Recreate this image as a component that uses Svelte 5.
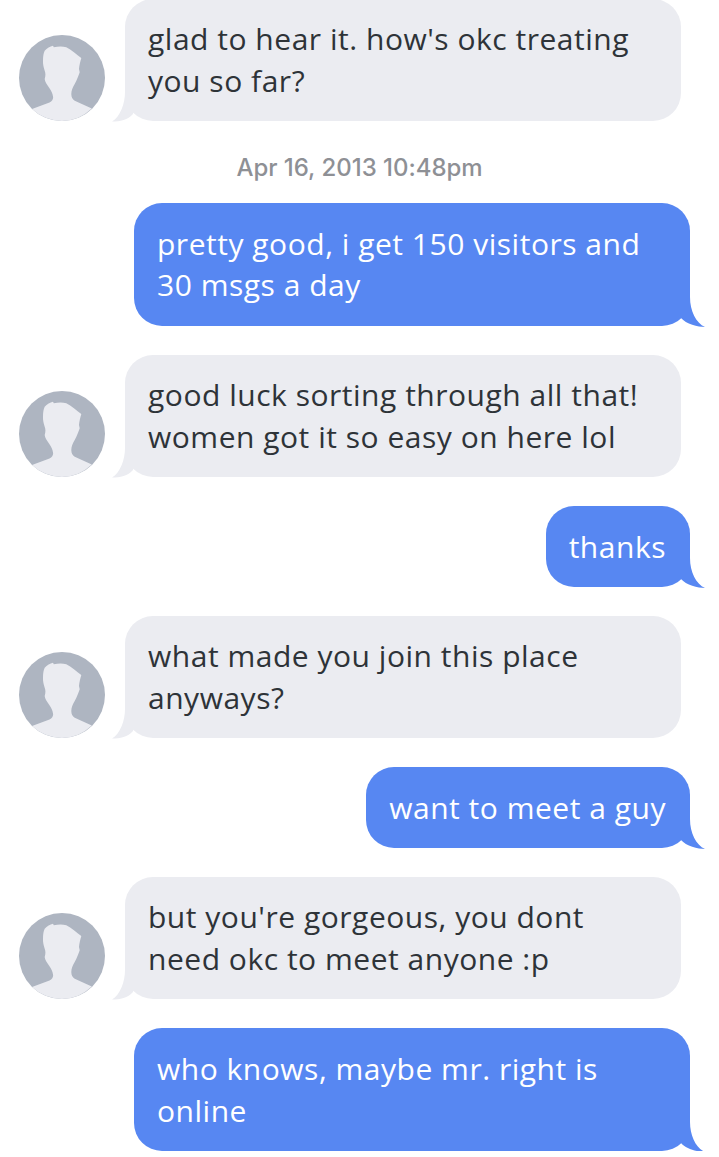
<script>
  const messages = [
    { from: 'them', text: "glad to hear it. how's okc treating you so far?" },
    { time: 'Apr 16, 2013 10:48pm' },
    { from: 'me', text: 'pretty good, i get 150 visitors and 30 msgs a day' },
    { from: 'them', text: 'good luck sorting through all that! women got it so easy on here lol' },
    { from: 'me', text: 'thanks' },
    { from: 'them', text: 'what made you join this place anyways?' },
    { from: 'me', text: 'want to meet a guy' },
    { from: 'them', text: "but you're gorgeous, you dont need okc to meet anyone :p" },
    { from: 'me', text: 'who knows, maybe mr. right is online' }
  ];
</script>

<div class="thread">
  {#each messages as m}
    {#if m.time}
      <div class="time">{m.time}</div>
    {:else if m.from === 'them'}
      <div class="row them">
        <svg class="avatar" viewBox="0 0 86 86" aria-hidden="true">
          <circle cx="43" cy="43" r="43" fill="#aeb5c1" />
          <path
            fill="#ebecf1"
            d="M13 74 L30.500 67.500 C33.500 66 34.500 63.500 34 61.500 C33.500 58.500 32.500 56 30 52.500 C27.500 49 26 46.500 25.700 44 C26.500 41 26.800 38.500 25.700 35.700 C24.500 32 23.800 28.500 24 25.700 C24 21.500 24.500 18 25.700 15.700 C28 13 31 11.500 34 10.700 L34.800 12.200 C39 11.300 43.500 11 47.300 12.300 C52.500 15 57.500 19.500 62.300 23 C61.300 26.500 60.300 30.500 60 34 L60.700 37.300 C59.300 41.500 57.700 45.500 55.700 49 C53.700 52.500 52.300 55.500 52.300 59 C52.300 62 53.500 64.500 55.700 65.700 L72.800 73.600 A43 43 0 0 1 13 74 Z"
          />
        </svg>
        <div class="bubble">
          <svg class="tail" viewBox="0 0 24 30" aria-hidden="true">
            <path d="M13 0 C13 12 8 25 0 29.500 C8 29.500 16 28 21 22 L24 0 Z" />
          </svg>
          {m.text}
        </div>
      </div>
    {:else}
      <div class="row me">
        <div class="bubble">
          {m.text}
          <svg class="tail" viewBox="0 0 24 30" aria-hidden="true">
            <path d="M9 0 C9 14 15 26 24 30 C17 30 5 27 0 21 L0 0 Z" />
          </svg>
        </div>
      </div>
    {/if}
  {/each}
</div>

<style>
  :global(body) {
    background: #fff;
  }
  .thread {
    display: flex;
    flex-direction: column;
    gap: 29px;
    margin-top: -1.5px;
    font-family: "Open Sans", Inter, sans-serif;
    font-size: 30px;
    line-height: 41.8px;
    letter-spacing: 0.52px;
  }
  .row {
    display: flex;
    align-items: flex-end;
  }
  .them {
    gap: 20px;
    padding-left: 19px;
  }
  .me {
    justify-content: flex-end;
    padding-right: 29px;
  }
  .avatar {
    width: 86px;
    height: 86px;
    flex: none;
  }
  .bubble {
    position: relative;
    max-width: 556px;
    box-sizing: border-box;
    padding: 19.45px 24px 19.45px 23px;
    border-radius: 28px;
  }
  .them .bubble {
    width: 556px;
    background: #ebecf1;
    color: #2e3338;
  }
  .me .bubble {
    background: #5787f2;
    color: #fff;
  }
  .tail {
    position: absolute;
    bottom: -1px;
    width: 24px;
    height: 30px;
  }
  .them .tail {
    left: -13px;
    fill: #ebecf1;
  }
  .me .tail {
    right: -15px;
    fill: #5787f2;
  }
  .time {
    margin: 3.5px 0 -9.3px;
    text-align: center;
    font-family: Inter, sans-serif;
    font-size: 24px;
    line-height: 30px;
    font-weight: 500;
    letter-spacing: -0.03px;
    color: #8e9095;
  }
</style>
